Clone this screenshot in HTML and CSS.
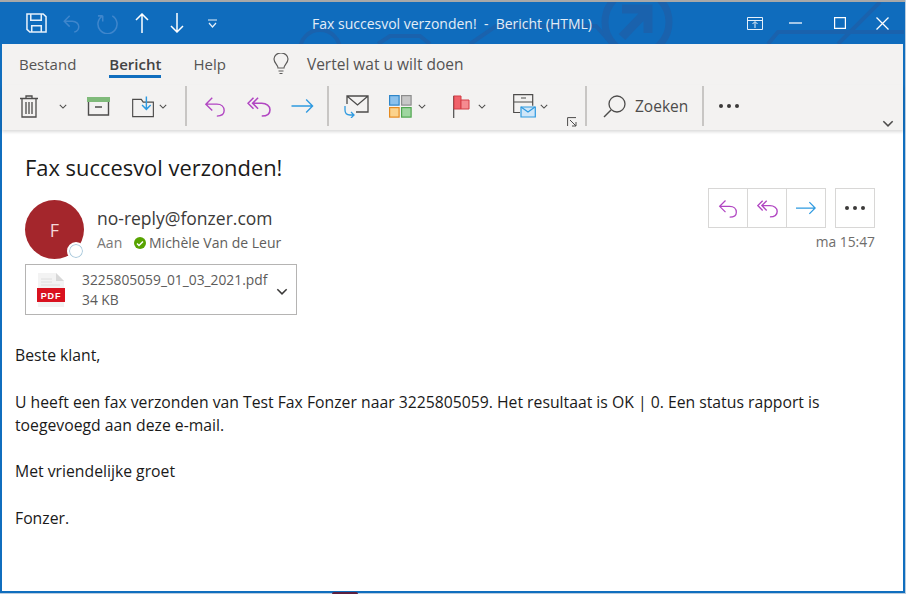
FILE: index.html
```html
<!DOCTYPE html>
<html lang="nl">
<head>
<meta charset="utf-8">
<title>Fax succesvol verzonden!</title>
<link rel="stylesheet" href="styles.css">
</head>
<body>
<svg class="defs" width="0" height="0">
  <symbol id="reply" viewBox="0 0 24 24"><path d="M9 3 2 10l7 7M2 10h12c5 0 8 3 8 7s-3 6-8 6" fill="none" stroke="currentColor" stroke-width="1.5"/></symbol>
  <symbol id="replyall" viewBox="0 0 26 24"><path d="M7 3 1 9l6 6M12 3 6 9l6 6M6 9h10c5 0 9 3 9 7s-3 7-9 7" fill="none" stroke="currentColor" stroke-width="1.7"/></symbol>
  <symbol id="forward" viewBox="0 0 24 24"><path d="M0 12h23M16 5l7 7-7 7" fill="none" stroke="currentColor" stroke-width="1.5"/></symbol>
  <symbol id="chev" viewBox="0 0 10 6"><path d="M1 1l4 4 4-4" fill="none" stroke="currentColor" stroke-width="1.3"/></symbol>
</svg>
<div class="window">
  <header class="titlebar">
    <svg class="watermark" width="904" height="44" viewBox="0 0 904 44">
      <g fill="none" stroke="#1a62ad" stroke-width="4">
        <circle cx="320" cy="50" r="20"/>
        <path d="M378 44l12-8h30l10 8"/>
        <path d="M470 44l26-18h100l16 18"/>
        <circle cx="637" cy="22" r="32" stroke-width="7"/>
        <path d="M622 37l25-26M622 9h26v24" stroke-width="9"/>
        <path d="M768 44l10-12h126M838 44 880 2"/>
      </g>
    </svg>
    <div class="qat">
      <svg class="q-save" width="21" height="20" viewBox="0 0 22 22" preserveAspectRatio="none"><path d="M1 1h17l3 3v17H4l-3-3zM5 1v7h11V1M6 21v-7h10v7" fill="none" stroke="#e6f0fa" stroke-width="1.6"/></svg>
      <svg class="q-undo" width="19" height="20" viewBox="0 0 20 22"><path d="M8 3 2 9l6 6M2 9h9c4 0 7 3 7 6s-2 5-5 6" fill="none" stroke="#3f86cc" stroke-width="1.6"/></svg>
      <svg class="q-redo" width="21" height="21" viewBox="0 0 22 22"><path d="M16 3a10 10 0 1 1-10 0M6 3v6M6 3H1" fill="none" stroke="#3f86cc" stroke-width="1.6"/></svg>
      <svg class="q-up" width="14" height="20" viewBox="0 0 14 20"><path d="M7 20V1M1 7l6-6 6 6" fill="none" stroke="#fff" stroke-width="1.5"/></svg>
      <svg class="q-down" width="14" height="20" viewBox="0 0 14 20"><path d="M7 0v19M1 13l6 6 6-6" fill="none" stroke="#fff" stroke-width="1.5"/></svg>
      <svg class="q-more" width="9" height="9" viewBox="0 0 9 9"><path d="M0 1h9M1 4l3.500 4L8 4" fill="none" stroke="#e6f0fa" stroke-width="1.200"/></svg>
    </div>
    <div class="wintitle">Fax succesvol verzonden!&nbsp; -&nbsp; Bericht (HTML)</div>
    <div class="winbtns">
      <svg width="16" height="13" viewBox="0 0 16 13"><path d="M.5.500h15v12H.5zM.5 3.500h15M8 11V5M5.500 7 8 4.500 10.500 7" fill="none" stroke="#e6f0fa"/></svg>
      <svg class="wb-min" width="13" height="2" viewBox="0 0 13 2"><path d="M0 1h13" stroke="#e6f0fa" stroke-width="1.400"/></svg>
      <svg class="wb-max" width="12" height="12" viewBox="0 0 12 12"><path d="M.6.600h10.800v10.800H.6z" fill="none" stroke="#fff" stroke-width="1.200"/></svg>
      <svg class="wb-close" width="13" height="13" viewBox="0 0 13 13"><path d="M.5.500l12 12M12.500.500l-12 12" stroke="#fff" stroke-width="1.300"/></svg>
    </div>
  </header>

  <nav class="tabs">
    <span class="tab">Bestand</span>
    <span class="tab active">Bericht</span>
    <span class="tab">Help</span>
    <svg class="bulb" width="16" height="22" viewBox="0 0 16 22"><path d="M5 15c0-3-4-5-4-9a7 6 0 0 1 14 0c0 4-4 6-4 9zM5.500 18h5M6.500 20.500h3" fill="none" stroke="#5c5b5a" stroke-width="1.200"/></svg>
    <span class="tell">Vertel wat u wilt doen</span>
  </nav>

  <div class="toolbar">
    <svg class="t-trash" width="18" height="23" viewBox="0 0 18 23"><path d="M6 3V1h6v2M0 3.500h18M2 4v18h14V4M6 7v12M9 7v12M12 7v12" fill="none" stroke="#4d4c4b" stroke-width="1.300"/></svg>
    <svg class="t-chev1 chev" width="8" height="5"><use href="#chev"/></svg>
    <svg class="t-arch" width="23" height="19" viewBox="0 0 23 19"><path d="M0 0h23v5H0z" fill="#7fba7a"/><path d="M1.500 5v13h20V5M8 10h7" fill="none" stroke="#4d4c4b" stroke-width="1.400"/></svg>
    <svg class="t-move" width="23" height="23" viewBox="0 0 24 23"><path d="M.7 4h9l2 3h10.600v15H.7z" fill="none" stroke="#4d4c4b" stroke-width="1.200"/><path d="M15 1v13M10.500 10l4.500 4.500 4.500-4.500" fill="none" stroke="#2e9ae0" stroke-width="1.500"/></svg>
    <svg class="t-chev2 chev" width="8" height="5"><use href="#chev"/></svg>
    <span class="sep s1"></span>
    <svg class="t-reply pur" width="22" height="22"><use href="#reply"/></svg>
    <svg class="t-replyall pur" width="24" height="22"><use href="#replyall"/></svg>
    <svg class="t-fwd blu" width="23" height="22"><use href="#forward"/></svg>
    <span class="sep s2"></span>
    <svg class="t-mail" width="25" height="23" viewBox="0 0 25 23"><path d="M3 9V1h21v16H12M3 1l10.500 9L24 1" fill="none" stroke="#4d4c4b" stroke-width="1.300"/><path d="M1 11v4c0 3 2 5 5 5h4M7 17l3 3-3 3" fill="none" stroke="#2e9ae0" stroke-width="1.300"/></svg>
    <svg class="t-cat" width="23" height="23" viewBox="0 0 23 23"><g stroke-width="1.200"><rect x=".6" y=".6" width="9.500" height="9.500" fill="#8cc1ec" stroke="#2f86c9"/><rect x="12.600" y=".6" width="9.500" height="9.500" fill="#c8c8c8" stroke="#8d8d8d"/><rect x=".6" y="12.600" width="9.500" height="9.500" fill="#fbd38d" stroke="#e58a1f"/><rect x="12.600" y="12.600" width="9.500" height="9.500" fill="#9fd6a0" stroke="#4fa64f"/></g></svg>
    <svg class="t-chev3 chev" width="8" height="5"><use href="#chev"/></svg>
    <svg class="t-flag" width="17" height="23" viewBox="0 0 17 23"><path d="M.7 23V.7" stroke="#4d4c4b" stroke-width="1.200"/><path d="M1 1h7v13H1z" fill="#f0626a" stroke="#d33d45"/><path d="M8 5h8v9H8z" fill="#f58b90" stroke="#d33d45"/></svg>
    <svg class="t-chev4 chev" width="8" height="5"><use href="#chev"/></svg>
    <svg class="t-rule" width="23" height="24" viewBox="0 0 23 24"><path d="M7 18.500H.7V.7h19v11M.7 8h19M8 4h5" fill="none" stroke="#4d4c4b" stroke-width="1.200"/><path d="M8 13h14.300v10H8z" fill="#cfe6f8" stroke="#2e9ae0" stroke-width="1.200"/><path d="M8 13l7 5 7-5" fill="none" stroke="#2e9ae0" stroke-width="1.200"/></svg>
    <svg class="t-chev5 chev" width="8" height="5"><use href="#chev"/></svg>
    <svg class="t-launch" width="10" height="10" viewBox="0 0 10 10"><path d="M.6 9V.6H9M3 3l6 6M9 5v4H5" fill="none" stroke="#4d4c4b"/></svg>
    <span class="sep s3"></span>
    <svg class="t-search" width="23" height="23" viewBox="0 0 23 23"><circle cx="14" cy="9" r="8" fill="none" stroke="#4d4c4b" stroke-width="1.300"/><path d="M8 15l-7 7" stroke="#4d4c4b" stroke-width="1.500"/></svg>
    <span class="zoek">Zoeken</span>
    <span class="sep s4"></span>
    <span class="dots d-bar"><i></i><i></i><i></i></span>
    <svg class="t-collapse" width="12" height="7"><use href="#chev"/></svg>
  </div>

  <main class="content">
    <section class="meta">
      <h1 class="subject">Fax succesvol verzonden!</h1>
      <div class="senderline">
        <div class="avatar">F<span class="presence"></span></div>
        <div class="who">
          <div class="from">no-reply@fonzer.com</div>
          <div class="to"><span class="aan">Aan</span><span class="okdot"><svg width="8" height="7" viewBox="0 0 8 7"><path d="M1 3.500l2 2 4-4" fill="none" stroke="#fff" stroke-width="1.500"/></svg></span><span>Michèle Van de Leur</span></div>
        </div>
        <div class="actions">
          <div class="btnrow">
            <div class="btngroup">
              <span class="abtn pur"><svg width="20" height="20"><use href="#reply"/></svg></span>
              <span class="abtn pur"><svg width="21" height="20"><use href="#replyall"/></svg></span>
              <span class="abtn blu"><svg width="20" height="20"><use href="#forward"/></svg></span>
            </div>
            <span class="abtn morebtn"><span class="dots"><i></i><i></i><i></i></span></span>
          </div>
          <div class="time">ma 15:47</div>
        </div>
      </div>
      <div class="attach">
        <svg class="pdf" width="28" height="34" viewBox="0 0 28 34"><path d="M1 0h18l8 8v26H1z" fill="#f3f3f3"/><path d="M19 0l8 8h-8z" fill="#d8d8d8"/><path d="M4 6h11M4 9h11M4 12h19" stroke="#dedede"/><rect y="15" width="28" height="14" fill="#d9121f"/></svg>
        <span class="pdflabel">PDF</span>
        <div class="fileinfo">
          <div class="fname">3225805059_01_03_2021.pdf</div>
          <div class="fsize">34 KB</div>
        </div>
        <svg class="attchev" width="12" height="7"><use href="#chev"/></svg>
      </div>
    </section>
    <article class="body">
      <p>Beste klant,</p>
      <p>U heeft een fax verzonden van Test Fax Fonzer naar 3225805059. Het resultaat is OK | 0. Een status rapport is toegevoegd aan deze e-mail.</p>
      <p>Met vriendelijke groet</p>
      <p>Fonzer.</p>
    </article>
  </main>
</div>
<span class="dock-stub"></span>
</body>
</html>
```
FILE: styles.css
```css
* { box-sizing: border-box; }
html, body { margin: 0; padding: 0; }
html { background: #b9cde0; }
body { position: relative; width: 906px; height: 594px; background: #b9cde0; font-family: "Open Sans", "Noto Sans", sans-serif; color: #3b3a39; overflow: hidden; }
.defs { position: absolute; }
.window { width: 905px; height: 593px; border: 2px solid #106ebe; border-top: 0; display: flex; flex-direction: column; background: #fff; }
.dock-stub { position: absolute; left: 332px; bottom: 0; width: 26px; height: 2px; background: #5a1f3f; border-radius: 2px 2px 0 0; }
.titlebar { position: relative; height: 44px; flex: none; background: #0f6cbd; display: flex; align-items: center; color: #e8f1fa; border-top: 2px solid #a8a8a8; margin: 0 -2px; padding: 0 0 0 2px; overflow: hidden; }
.watermark { position: absolute; left: 0; top: -2px; }
.qat { position: relative; display: flex; align-items: center; width: 310px; flex: none; }
.qat svg { flex: none; }
.q-save { margin-left: 24px; }
.q-undo { margin-left: 15px; }
.q-redo { margin-left: 16px; }
.q-up { margin-left: 17px; }
.q-down { margin-left: 21px; }
.q-more { margin-left: 24px; }
.wintitle { position: relative; font-size: 14px; white-space: nowrap; color: #e3edf7; }
.winbtns { position: relative; margin-left: auto; display: flex; align-items: center; padding-right: 16px; }
.wb-min { margin-left: 26px; }
.wb-max { margin-left: 32px; }
.wb-close { margin-left: 30px; }

.tabs { height: 41px; flex: none; background: #f3f2f1; display: flex; align-items: center; font-size: 15px; color: #555453; padding: 0 0 2px 17px; }
.tab { line-height: 20px; }
.tab:nth-child(2) { margin-left: 33px; }
.tab:nth-child(3) { margin-left: 32px; }
.tab.active { font-weight: 600; color: #444; position: relative; }
.tab.active::after { content: ""; position: absolute; left: 0; right: 0; bottom: -4px; height: 3px; background: #106ebe; }
.bulb { margin-left: 47px; }
.tell { margin-left: 18px; font-size: 15.5px; }

.toolbar { height: 45px; flex: none; background: #f3f2f1; display: flex; align-items: center; color: #4d4c4b; position: relative; font-size: 15.5px; box-shadow: 0 2px 3px rgba(0,0,0,.14); z-index: 1; padding-bottom: 3px; }
.toolbar svg { flex: none; }
.chev { color: #4d4c4b; }
.pur { color: #b146c2; }
.blu { color: #2e9ae0; }
.sep { width: 2px; height: 40px; background: #c8c6c4; flex: none; }
.t-trash { margin-left: 18px; }
.t-chev1 { margin-left: 21px; }
.t-arch { margin-left: 20px; }
.t-move { margin-left: 22px; }
.t-chev2 { margin-left: 4px; }
.s1 { margin-left: 18px; }
.t-reply { margin-left: 17px; }
.t-replyall { margin-left: 21px; }
.t-fwd { margin-left: 20px; }
.s2 { margin-left: 13px; }
.t-mail { margin-left: 15px; }
.t-cat { margin-left: 20px; }
.t-chev3 { margin-left: 6px; }
.t-flag { margin-left: 27px; }
.t-chev4 { margin-left: 8px; }
.t-rule { margin-left: 27px; }
.t-chev5 { margin-left: 4px; }
.t-launch { margin-left: 19px; margin-top: 32px; }
.s3 { margin-left: 8px; }
.t-search { margin-left: 16px; }
.zoek { margin-left: 9px; }
.s4 { margin-left: 14px; }
.d-bar { margin-left: 15px; gap: 5px; }
.t-collapse { position: absolute; right: 9px; bottom: 3px; color: #4d4c4b; }
.dots { display: inline-flex; gap: 4px; align-items: center; }
.dots i { display: block; width: 4px; height: 4px; border-radius: 50%; background: #3b3a39; }

.content { flex: 1; min-height: 0; background: #fff; }
.meta { padding: 0 28px 0 23px; }
.subject { margin: 0; padding-top: 23px; font-size: 21.9px; line-height: 30px; font-weight: 400; color: #1b1a19; }
.senderline { display: flex; margin-top: 17px; height: 61px; position: relative; }
.avatar { width: 59px; height: 59px; border-radius: 50%; background: #a4262c; color: #f3d9da; font-size: 18px; display: flex; align-items: center; justify-content: center; position: relative; flex: none; }
.presence { position: absolute; right: -1px; bottom: -1px; width: 18px; height: 18px; border-radius: 50%; background: #fff; border: 2px solid #fff; box-shadow: inset 0 0 0 1px #a9c9dc; }
.who { margin-left: 13px; }
.from { font-size: 17.500px; line-height: 23px; margin-top: 7px; color: #3b3a39; }
.to { display: flex; align-items: center; font-size: 14px; line-height: 20px; margin-top: 3px; color: #605e5c; }
.aan { color: #7a7876; width: 37px; }
.okdot { width: 12px; height: 12px; border-radius: 50%; background: #57a300; display: flex; align-items: center; justify-content: center; margin-right: 3px; }
.actions { margin-left: auto; margin-top: -12px; display: flex; flex-direction: column; align-items: flex-end; }
.btnrow { display: flex; gap: 9px; }
.btngroup { display: flex; }
.abtn { width: 40px; height: 40px; border: 1px solid #d8d7d6; display: flex; align-items: center; justify-content: center; background: #fff; }
.btngroup .abtn + .abtn { margin-left: -1px; }
.time { font-size: 13.800px; color: #6f6d6b; line-height: 18px; margin-top: 5px; }
.attach { width: 272px; height: 51px; margin-top: 3px; border: 1px solid #b5b4b3; display: flex; align-items: center; position: relative; padding-left: 11px; }
.pdf { flex: none; }
.pdflabel { position: absolute; left: 11px; top: 24px; width: 28px; color: #fff; font: 700 9px/14px "Liberation Sans", sans-serif; letter-spacing: .8px; text-align: center; }
.fileinfo { margin-left: 17px; font-size: 13.800px; line-height: 20px; color: #5c5b5a; }
.fname { white-space: nowrap; }
.attchev { position: absolute; right: 8px; top: 23px; color: #3b3a39; }

.body { padding: 29px 60px 0 13px; font-size: 15.75px; line-height: 23.300px; color: #1a1a1a; }
.body p { margin: 0 0 23.300px; }
```
